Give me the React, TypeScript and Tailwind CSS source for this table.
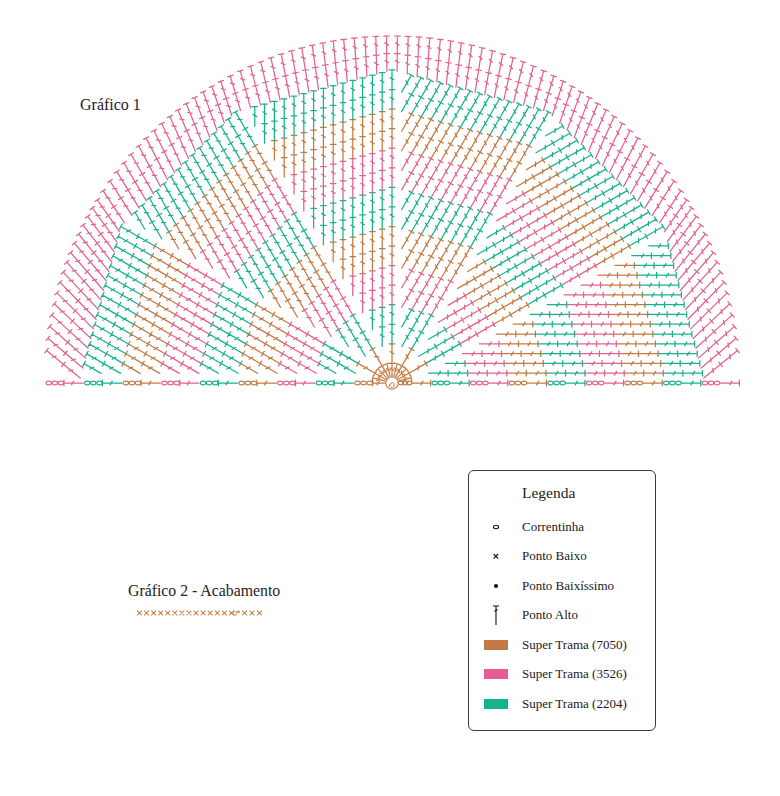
import { useMemo } from 'react';

const CX = 392;
const CY = 383;
const P = 18.9; // depth of one round
const S = 9.8; // gap between parallel lines
const N = 16; // rounds inside the polygon
const R = 347; // outer edge
const DEG = Math.PI / 180;
const COLORS = ['#c47b43', '#17b18e', '#e4608f'];

const band = (round: number) => Math.floor((round - 1) / 2) % 3;
const f = (n: number) => n.toFixed(1);
const sx = (x: number) => CX + x;
const sy = (y: number) => CY - y;

// ponto alto in math coords (y up): line, cap at the end, slash in the middle
function stitch(ax: number, ay: number, bx: number, by: number) {
  const dx = bx - ax;
  const dy = by - ay;
  const len = Math.hypot(dx, dy) || 1;
  const ux = dx / len;
  const uy = dy / len;
  const px = -uy;
  const py = ux;
  const c = 2.8;
  const mx = ax + dx * 0.55;
  const my = ay + dy * 0.55;
  const t = 1.8;
  const s2 = 1.1;
  return (
    `M${f(sx(ax))} ${f(sy(ay))}L${f(sx(bx))} ${f(sy(by))}` +
    `M${f(sx(bx + px * c))} ${f(sy(by + py * c))}L${f(sx(bx - px * c))} ${f(sy(by - py * c))}` +
    `M${f(sx(mx + px * t + ux * s2))} ${f(sy(my + py * t + uy * s2))}L${f(sx(mx - px * t - ux * s2))} ${f(sy(my - py * t - uy * s2))}`
  );
}

function buildChart() {
  const d = ['', '', ''];
  const chains: { x: number; c: number }[] = [];
  const cos15 = Math.cos(15 * DEG);
  const sin15 = Math.sin(15 * DEG);

  // six wedges, lines parallel to the wedge's first edge
  for (let k = 0; k < 6; k++) {
    const a = k * 30 * DEG;
    const ux = Math.cos(a);
    const uy = Math.sin(a);
    const vx = -uy;
    const vy = ux;
    for (let j = k === 0 ? 1 : 0; j <= N - 2; j++) {
      const off = j * S;
      const uAt = (m: number) => (m * P - off * sin15) / cos15;
      for (let m = j + 2; m <= N; m++) {
        const u1 = uAt(m - 1);
        const u2 = uAt(m);
        d[band(m)] += stitch(u1 * ux + off * vx, u1 * uy + off * vy, u2 * ux + off * vx, u2 * uy + off * vy);
      }
    }
  }

  // first round around the ring
  for (let i = 1; i < 12; i++) {
    const a = i * 15 * DEG;
    const r2 = i % 2 === 0 ? P / cos15 : P + 1;
    d[0] += stitch(7 * Math.cos(a), 7 * Math.sin(a), r2 * Math.cos(a), r2 * Math.sin(a));
  }

  // outer pink border
  const A = N * P;
  const cols = 96;
  for (let i = 0; i < cols; i++) {
    const th = 0.9 + i * (178.2 / (cols - 1));
    const k = Math.min(5, Math.floor(th / 30));
    const r0 = A / Math.cos((th - (k * 30 + 15)) * DEG);
    const x0 = r0 * Math.cos(th * DEG);
    const y0 = r0 * Math.sin(th * DEG);
    const ph = (90 + (th - 90) * 0.57) * DEG;
    const dx = Math.cos(ph);
    const dy = Math.sin(ph);
    const pd = x0 * dx + y0 * dy;
    const t = -pd + Math.sqrt(pd * pd - r0 * r0 + R * R);
    d[2] += stitch(x0, y0, x0 + (dx * t) / 2, y0 + (dy * t) / 2);
    d[2] += stitch(x0 + (dx * t) / 2, y0 + (dy * t) / 2, x0 + dx * t, y0 + dy * t);
  }

  // foundation row: chains and pontos altos
  const B = 19.3;
  for (let m = 1; m <= 9; m++) {
    const c = (m - 1) % 3;
    // right: chains then stitch
    const r0 = (2 * m - 2) * B + (m === 1 ? 7 : 1);
    const r1 = (2 * m - 1) * B;
    const w = r1 - r0;
    for (let e = 0; e < 3; e++) chains.push({ x: sx(r0 + (w * (2 * e + 1)) / 6), c });
    d[c] += stitch(r1, 0, 2 * m * B, 0);
    // left: stitch then chains
    const l0 = (2 * m - 2) * B + (m === 1 ? 7 : 0);
    const l1 = (2 * m - 1) * B;
    d[c] += stitch(-l0, 0, -l1, 0);
    const lw = 2 * m * B - 1 - l1;
    for (let e = 0; e < 3; e++) chains.push({ x: sx(-(l1 + (lw * (2 * e + 1)) / 6)), c });
  }

  return { d, chains };
}

function Chart() {
  const { d, chains } = useMemo(buildChart, []);
  return (
    <svg width={780} height={400} viewBox="0 0 780 400" className="block">
      {d.map((p, i) => (
        <path key={i} d={p} stroke={COLORS[i]} strokeWidth={1.25} fill="none" strokeLinecap="round" />
      ))}
      {chains.map((ch, i) => (
        <ellipse key={i} cx={ch.x} cy={CY} rx={2.7} ry={1.9} stroke={COLORS[ch.c]} strokeWidth={1.1} fill="none" />
      ))}
      <circle cx={CX} cy={CY} r={6.2} stroke={COLORS[0]} strokeWidth={1.1} fill="none" />
      <path d={`M${CX - 3} ${CY + 3}c2 -5 6 -4 5 0c-1 3 -5 2 -4 -2`} stroke={COLORS[0]} strokeWidth={1} fill="none" />
    </svg>
  );
}

function FinishRow() {
  const xs = Array.from({ length: 14 }, (_, i) => 5.5 + i * 7.07);
  const tail = [110.5, 118, 125.5];
  const cross = (x: number) => `M${x - 2.4} 2.6L${x + 2.4} 7.4M${x - 2.4} 7.4L${x + 2.4} 2.6`;
  return (
    <svg width={140} height={10} viewBox="0 0 140 10" className="block">
      <path d={[...xs, ...tail].map(cross).join('')} stroke="#c8844c" strokeWidth={1.05} fill="none" />
      <ellipse cx={101} cy={5.2} rx={1.7} ry={2.1} stroke="#c8844c" strokeWidth={0.9} fill="none" />
      <circle cx={104.6} cy={3.8} r={1.3} fill="#c8844c" />
    </svg>
  );
}

const legendRows: { label: string; icon: React.ReactNode }[] = [
  {
    label: 'Correntinha',
    icon: (
      <svg width="8" height="6" viewBox="0 0 8 6">
        <ellipse cx="4" cy="3" rx="2.6" ry="1.7" stroke="#111" strokeWidth="1.1" fill="none" />
      </svg>
    ),
  },
  {
    label: 'Ponto Baixo',
    icon: (
      <svg width="8" height="8" viewBox="0 0 8 8">
        <path d="M1.6 2L6.2 6.6M1.6 6.6L6.2 2" stroke="#111" strokeWidth="1.1" />
      </svg>
    ),
  },
  {
    label: 'Ponto Baixíssimo',
    icon: (
      <svg width="8" height="8" viewBox="0 0 8 8">
        <circle cx="4" cy="4" r="2.1" fill="#111" />
      </svg>
    ),
  },
  {
    label: 'Ponto Alto',
    icon: (
      <svg width="10" height="22" viewBox="0 0 10 22">
        <path d="M2 2H8M5 2V21M3.4 7.2L6.6 5.6" stroke="#111" strokeWidth="1.1" fill="none" />
      </svg>
    ),
  },
  { label: 'Super Trama (7050)', icon: <div className="h-[10px] w-[24px] bg-[#c27a42]" /> },
  { label: 'Super Trama (3526)', icon: <div className="h-[10px] w-[24px] bg-[#e65e91]" /> },
  { label: 'Super Trama (2204)', icon: <div className="h-[10px] w-[24px] bg-[#12b38f]" /> },
];

function Legend() {
  return (
    <div className="mt-[70px] mr-[124px] h-[261px] w-[188px] rounded-md border border-[#3c3c3c] pt-[12px]">
      <div className="pl-[53px] text-[15.5px] leading-[20px] text-[#222]">Legenda</div>
      <div className="mt-[9px] flex flex-col">
        {legendRows.map(r => (
          <div key={r.label} className="flex h-[29.5px] items-center">
            <div className="flex w-[53px] justify-center">{r.icon}</div>
            <span className="text-[13px] leading-[16px] text-[#1a1a1a]">{r.label}</span>
          </div>
        ))}
      </div>
    </div>
  );
}

export default function App() {
  return (
    <div className="relative h-[796px] w-[780px] overflow-hidden bg-white font-['Liberation_Serif',serif]">
      <div className="relative">
        <Chart />
        <div className="absolute left-[80px] top-[95px] text-[16px] leading-[20px] text-[#222]">Gráfico 1</div>
      </div>
      <div className="flex items-start justify-between">
        <div className="pl-[128px] pt-[181px]">
          <div className="text-[15.8px] leading-[20px] text-[#222]">Gráfico 2 - Acabamento</div>
          <div className="ml-[6px] mt-[7px]">
            <FinishRow />
          </div>
        </div>
        <Legend />
      </div>
    </div>
  );
}
